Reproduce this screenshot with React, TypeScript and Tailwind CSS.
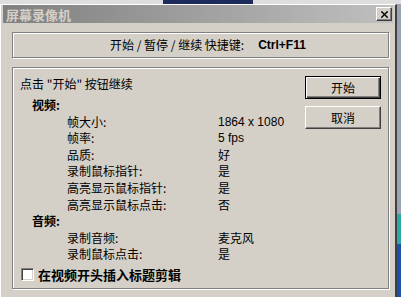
import { X } from 'lucide-react';

const cjk = { fontFamily: '"Noto Sans CJK SC", "Liberation Sans", sans-serif' };
const latin = { fontFamily: '"Liberation Sans", "Noto Sans CJK SC", sans-serif' };

const videoRows = [
  ['帧大小:', '1864 x 1080'],
  ['帧率:', '5 fps'],
  ['品质:', '好'],
  ['录制鼠标指针:', '是'],
  ['高亮显示鼠标指针:', '是'],
  ['高亮显示鼠标点击:', '否'],
];

const audioRows = [
  ['录制音频:', '麦克风'],
  ['录制鼠标点击:', '是'],
];

function Rows({ rows }: { rows: string[][] }) {
  return (
    <div className="grid grid-cols-[151px_1fr] pl-[47px]">
      {rows.map(([label, value]) => (
        <div key={label} className="contents">
          <span className="h-[16.6px] leading-[16.6px] whitespace-nowrap">{label}</span>
          <span
            className="h-[16.6px] leading-[16.6px] whitespace-nowrap"
            style={/^[0-9]/.test(value) ? latin : undefined}
          >
            {value}
          </span>
        </div>
      ))}
    </div>
  );
}

export default function App() {
  return (
    <div className="w-[401px] h-[297px] overflow-hidden flex flex-col bg-[#d4d0c8] text-black text-[12px]" style={cjk}>
      {/* strip of the window behind */}
      <div className="h-[4px] flex bg-[#dedede] shrink-0">
        <div className="w-[163px]" />
        <div className="w-[90px] bg-[#1c2a5c]" />
      </div>

      <div className="flex flex-1 min-h-0">
        {/* WINDOW */}
        <div className="w-[397px] flex flex-col border-l border-t border-white border-r-2 border-r-[#404040] px-[2px]">
          {/* title bar */}
          <div className="h-[18px] flex items-center justify-between bg-gradient-to-r from-[#808080] to-[#c0c0c0] pl-[3px] pr-[1px]">
            <span className="text-[13px] font-bold text-[#d4d0c8] leading-none">屏幕录像机</span>
            <div className="w-[16px] h-[14px] flex items-center justify-center bg-[#d4d0c8] border border-t-white border-l-white border-r-[#404040] border-b-[#404040] shadow-[inset_-1px_-1px_0_#808080]">
              <X size={11} strokeWidth={3} color="#000" />
            </div>
          </div>

          {/* body */}
          <div className="pl-[9px] pt-[9px] flex flex-col gap-[9px]">
            {/* shortcut box */}
            <div className="w-[377px] h-[26px] border border-[#808080] shadow-[inset_1px_1px_0_#fff,1px_1px_0_#fff] flex items-center pl-[97px]">
              <span className="whitespace-nowrap">开始 / 暂停 / 继续 快捷键:</span>
              <span className="ml-[14px] font-bold" style={latin}>Ctrl+F11</span>
            </div>

            {/* settings box */}
            <div className="w-[377px] h-[222px] border border-[#808080] shadow-[inset_1px_1px_0_#fff,1px_1px_0_#fff] flex">
              <div className="flex-1 pl-[7px] pt-[9px] flex flex-col">
                <span className="h-[14px] leading-[14px] whitespace-nowrap">点击 "开始" 按钮继续</span>

                <span className="mt-[6px] pl-[12px] h-[16.6px] leading-[16.6px] font-bold">视频:</span>
                <Rows rows={videoRows} />

                <span className="pl-[12px] h-[16.6px] leading-[16.6px] font-bold">音频:</span>
                <Rows rows={audioRows} />

                <label className="mt-[5px] ml-[1px] flex items-center gap-[4px]">
                  <span className="w-[13px] h-[13px] bg-white border border-t-[#808080] border-l-[#808080] border-r-white border-b-white shadow-[inset_1px_1px_0_#404040,inset_-1px_-1px_0_#d4d0c8]" />
                  <span className="text-[13px] font-bold leading-[14px] whitespace-nowrap">在视频开头插入标题剪辑</span>
                </label>
              </div>

              <div className="pt-[8px] pr-[7px] flex flex-col gap-[7px]">
                <button className="w-[76px] h-[23px] flex items-center justify-center bg-[#d4d0c8] border border-black shadow-[inset_1px_1px_0_#fff,inset_-1px_-1px_0_#404040,inset_-2px_-2px_0_#808080]">
                  开始
                </button>
                <button className="w-[76px] h-[23px] flex items-center justify-center bg-[#d4d0c8] border border-t-white border-l-white border-r-[#404040] border-b-[#404040] shadow-[inset_-1px_-1px_0_#808080]">
                  取消
                </button>
              </div>
            </div>
          </div>
        </div>

        {/* desktop edge */}
        <div className="flex-1 flex flex-col bg-[#3c4a6a]">
          <div className="h-[210px] bg-[#9aa4b4]" />
          <div className="h-[30px] bg-[#2fa6a8]" />
          <div className="flex-1 bg-[#1d4fa8]" />
        </div>
      </div>
    </div>
  );
}
